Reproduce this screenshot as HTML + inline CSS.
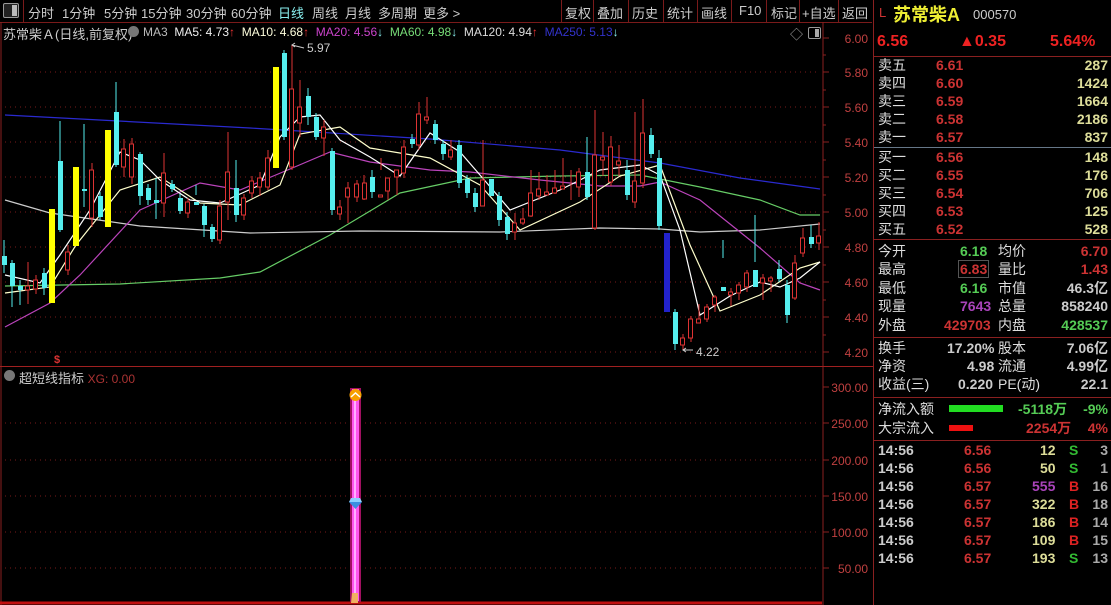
<!DOCTYPE html>
<html><head><meta charset="utf-8"><style>
html,body{margin:0;padding:0;background:#000;width:1111px;height:605px;overflow:hidden;font-family:"Liberation Sans","Noto Sans CJK SC",sans-serif}
.t{position:absolute;white-space:nowrap}
#top{position:absolute;left:0;top:0;width:872px;height:22px;border-bottom:1px solid #7a1a1a;background:#000}
#top span{position:absolute;top:3px;font-size:13px;color:#ccc}
.sep{position:absolute;top:0;width:1px;height:22px;background:#7a1a1a}
#rp{position:absolute;left:873px;top:0;width:238px;height:605px;border-left:1px solid #8a2020}
.row{position:absolute;left:4px;width:230px;height:18px;font-size:14px;line-height:18px;color:#ddd}
.row b{font-weight:bold;position:absolute}
.hl{position:absolute;left:0;width:238px;height:1px;background:#8a2020}
</style></head><body>
<div id="top">
<div style="position:absolute;left:3px;top:3px;width:14px;height:13px;border:1px solid #999;border-radius:2px;background:#222"><div style="position:absolute;right:1px;top:1px;width:5px;height:11px;background:#bbb"></div></div>
<div class="sep" style="left:23px"></div>
<span style="left:28px">分时</span><span style="left:62px">1分钟</span><span style="left:104px">5分钟</span><span style="left:141px">15分钟</span><span style="left:186px">30分钟</span><span style="left:231px">60分钟</span><span style="left:278px;color:#8ee">日线</span><span style="left:312px">周线</span><span style="left:345px">月线</span><span style="left:378px">多周期</span><span style="left:423px">更多 &gt;</span>
<div class="sep" style="left:561px"></div><span style="left:565px">复权</span>
<div class="sep" style="left:593px"></div><span style="left:597px">叠加</span>
<div class="sep" style="left:628px"></div><span style="left:632px">历史</span>
<div class="sep" style="left:663px"></div><span style="left:667px">统计</span>
<div class="sep" style="left:697px"></div><span style="left:701px">画线</span>
<div class="sep" style="left:731px"></div><span style="left:739px">F10</span>
<div class="sep" style="left:766px"></div><span style="left:771px">标记</span>
<div class="sep" style="left:799px"></div><span style="left:802px">+自选</span>
<div class="sep" style="left:838px"></div><span style="left:842px">返回</span>
</div>
<div class="t" style="left:3px;top:24px;font-size:13px;color:#ccc">苏常柴Ａ(日线,前复权)</div>
<div class="t" style="left:128px;top:26px;width:11px;height:11px;border-radius:6px;background:#777"></div>
<div class="t" style="left:143px;top:25px;font-size:12px;color:#bbb">MA3 &nbsp;<span style="color:#eee">MA5: 4.73</span><span style="color:#e33">↑</span> &nbsp;<span style="color:#ffd">MA10: 4.68</span><span style="color:#e33">↑</span> &nbsp;<span style="color:#c4c">MA20: 4.56</span><span style="color:#8ee">↓</span> &nbsp;<span style="color:#7d7">MA60: 4.98</span><span style="color:#8ee">↓</span> &nbsp;<span style="color:#ddd">MA120: 4.94</span><span style="color:#e33">↑</span> &nbsp;<span style="color:#33c">MA250: 5.13</span><span style="color:#8ee">↓</span></div>
<div class="t" style="left:790px;top:24px;font-size:13px;color:#aaa">◇</div>
<div class="t" style="left:808px;top:27px;width:11px;height:10px;border:1px solid #999;border-radius:2px"><div style="position:absolute;right:1px;top:1px;width:4px;height:8px;background:#aaa"></div></div>

<svg style="position:absolute;left:0;top:0" width="873" height="605">
<g stroke="#7a1a1a" stroke-dasharray="1,4" stroke-width="1">
<path d="M5 72H820M5 107H820M5 142H820M5 177H820M5 212H820M5 247H820M5 282H820M5 317H820M5 352H820"/>
<path d="M5 423H820M5 460H820M5 496H820M5 532H820M5 568H820"/>
</g>
<line x1="1" y1="22" x2="1" y2="605" stroke="#8a2020"/>
<line x1="823" y1="22" x2="823" y2="605" stroke="#8a2020"/>
<line x1="0" y1="366.5" x2="873" y2="366.5" stroke="#a02020"/>
<line x1="0" y1="603" x2="822" y2="603" stroke="#c01010" stroke-width="3"/>
<g stroke="#8a2020"><path d="M823 38h6M823 55h3M823 72h6M823 90h3M823 107h6M823 125h3M823 142h6M823 160h3M823 177h6M823 195h3M823 212h6M823 230h3M823 247h6M823 265h3M823 282h6M823 300h3M823 317h6M823 335h3M823 352h6M823 387h6M823 423h6M823 460h6M823 496h6M823 532h6M823 568h6"/></g>
<g font-size="12" fill="#c04040" text-anchor="end" font-family="Liberation Sans">
<text x="868" y="43">6.00</text><text x="868" y="77">5.80</text><text x="868" y="112">5.60</text><text x="868" y="147">5.40</text><text x="868" y="182">5.20</text><text x="868" y="217">5.00</text><text x="868" y="252">4.80</text><text x="868" y="287">4.60</text><text x="868" y="322">4.40</text><text x="868" y="357">4.20</text>
<text x="868" y="392">300.00</text><text x="868" y="428">250.00</text><text x="868" y="465">200.00</text><text x="868" y="501">150.00</text><text x="868" y="537">100.00</text><text x="868" y="573">50.00</text>
</g>
<!-- MAs -->
<g fill="none" stroke-width="1.2">
<polyline stroke="#2a2ad0" points="5,115 250,128 430,139 560,150 660,163 740,178 820,189"/>
<polyline stroke="#6c6" points="5,286 120,284 220,278 260,272 330,235 400,193 470,178 560,176 640,175 700,187 760,200 800,215 820,215"/>
<polyline stroke="#ccc" points="5,200 50,213 140,226 250,233 360,231 500,232 600,228 660,229 700,232 760,230 820,224"/>
<polyline stroke="#b4b" points="5,327 50,303 80,275 140,210 200,183 240,190 290,169 330,152 370,162 430,170 470,172 540,180 600,186 640,186 660,182 700,200 760,248 800,283 820,290"/>
<polyline stroke="#ffc" points="5,293 50,287 76,245 120,190 160,177 200,203 240,205 280,185 300,134 340,127 370,148 430,158 480,185 520,230 580,202 620,176 660,165 690,245 720,311 760,295 800,268 820,262"/>
<polyline stroke="#fff" points="5,275 40,283 60,255 90,210 120,152 140,160 160,180 190,200 220,203 260,185 280,137 300,117 320,115 340,140 370,157 400,176 430,133 460,152 480,175 510,210 560,190 600,170 640,165 660,175 680,230 700,315 730,296 760,282 780,287 800,278 820,262"/>
</g>
<!-- wicks -->
<g stroke="#5ee" stroke-width="1">
<path d="M4 240V273M12 260V307M20 280V305M44 268V295M60 121V232M84 124V207M100 192V220M116 82V167M140 152V205M148 184V205M156 178V219M172 180V192M180 194V214M196 185V195M204 204V237M212 224V242M236 160V222M284 50V140M308 88V125M316 113V140M332 148V215M372 170V198M412 134V148M435 120V144M443 140V160M459 140V188M467 175V198M475 188V212M491 410M499 192V226M507 212V240M587 137V200M627 160V200M651 128V158M659 150V230M675 309V350M723 240V258M755 215V262M779 260V282M787 280V323M811 225V248"/>
</g>
<g stroke="#d33" stroke-width="1">
<path d="M28 262V304M36 275V294M68 245V275M92 163V227M108 258M124 139V177M132 138V184M164 153V217M188 198V218M220 200V244M228 132V220M244 194V220M252 176V198M260 172V196M268 150V190M292 45V170M300 80V137M324 120V156M340 200V220M348 182V223M357 180V202M364 175V200M381 158V170M388 178V200M397 175V195M404 140V178M419 102V150M427 97V124M451 140V160M483 140V202M515 213V240M523 208V225M531 170V217M539 172V200M547 175V195M555 170V194M563 158V185M571 170V200M579 168V197M595 110V230M603 132V176M611 136V186M619 145V176M635 112V208M643 99V188M683 334V350M691 316V342M699 304V322M707 304V322M715 295V312M731 288V306M739 282V300M747 270V292M763 274V300M771 276V292M795 255V300M803 228V257M819 222V250"/>
</g>
<!-- bodies cyan -->
<g fill="#5ee">
<rect x="2" y="256" width="5" height="9"/><rect x="10" y="263" width="5" height="23"/><rect x="18" y="286" width="5" height="4"/><rect x="42" y="273" width="5" height="15"/><rect x="58" y="161" width="5" height="69"/><rect x="82" y="189" width="5" height="2"/><rect x="98" y="196" width="5" height="21"/><rect x="114" y="112" width="5" height="53"/><rect x="138" y="154" width="5" height="42"/><rect x="146" y="188" width="5" height="12"/><rect x="154" y="200" width="5" height="3"/><rect x="170" y="184" width="5" height="5"/><rect x="178" y="198" width="5" height="13"/><rect x="194" y="202" width="5" height="3"/><rect x="202" y="206" width="5" height="19"/><rect x="210" y="227" width="5" height="12"/><rect x="234" y="188" width="5" height="27"/><rect x="282" y="53" width="5" height="84"/><rect x="306" y="96" width="5" height="21"/><rect x="314" y="117" width="5" height="20"/><rect x="330" y="151" width="5" height="59"/><rect x="370" y="177" width="5" height="15"/><rect x="410" y="139" width="5" height="5"/><rect x="433" y="124" width="5" height="16"/><rect x="441" y="144" width="5" height="10"/><rect x="457" y="145" width="5" height="38"/><rect x="465" y="179" width="5" height="14"/><rect x="473" y="193" width="5" height="14"/><rect x="489" y="179" width="5" height="17"/><rect x="497" y="196" width="5" height="24"/><rect x="505" y="217" width="5" height="17"/><rect x="585" y="172" width="5" height="25"/><rect x="625" y="170" width="5" height="25"/><rect x="649" y="135" width="5" height="19"/><rect x="657" y="158" width="5" height="68"/><rect x="673" y="312" width="5" height="32"/><rect x="721" y="287" width="5" height="4"/><rect x="753" y="270" width="5" height="17"/><rect x="777" y="269" width="5" height="10"/><rect x="785" y="285" width="5" height="30"/><rect x="809" y="237" width="5" height="7"/>
</g>
<g fill="#ff0"><rect x="49" y="209" width="6" height="94"/><rect x="73" y="167" width="6" height="79"/><rect x="105" y="130" width="6" height="97"/><rect x="273" y="67" width="6" height="101"/></g>
<rect x="664" y="233" width="6" height="79" fill="#22c"/>
<!-- red hollow bodies -->
<g fill="#000" stroke="#d33" stroke-width="1">
<rect x="25.5" y="286" width="4" height="4"/><rect x="33.5" y="280" width="4" height="9"/><rect x="65.5" y="252" width="4" height="18"/><rect x="89.5" y="170" width="4" height="48"/><rect x="121.5" y="149" width="4" height="18"/><rect x="129.5" y="144" width="4" height="33"/><rect x="161.5" y="173" width="4" height="30"/><rect x="185.5" y="202" width="4" height="11"/><rect x="217.5" y="206" width="4" height="34"/><rect x="225.5" y="172" width="4" height="30"/><rect x="241.5" y="198" width="4" height="17"/><rect x="249.5" y="181" width="4" height="12"/><rect x="257.5" y="178" width="4" height="9"/><rect x="265.5" y="158" width="4" height="29"/><rect x="289.5" y="89" width="4" height="78"/><rect x="297.5" y="107" width="4" height="16"/><rect x="321.5" y="127" width="4" height="11"/><rect x="337.5" y="207" width="4" height="7"/><rect x="345.5" y="188" width="4" height="9"/><rect x="354.5" y="184" width="4" height="13"/><rect x="362.5" y="183" width="4" height="16"/><rect x="378.5" y="195" width="4" height="2"/><rect x="385.5" y="178" width="4" height="13"/><rect x="394.5" y="170" width="4" height="7"/><rect x="401.5" y="147" width="4" height="26"/><rect x="416.5" y="114" width="4" height="31"/><rect x="424.5" y="117" width="4" height="3"/><rect x="448.5" y="150" width="4" height="7"/><rect x="480.5" y="180" width="4" height="26"/><rect x="512.5" y="223" width="4" height="9"/><rect x="520.5" y="219" width="4" height="4"/><rect x="528.5" y="193" width="4" height="23"/><rect x="536.5" y="189" width="4" height="7"/><rect x="544.5" y="192" width="4" height="3"/><rect x="552.5" y="188" width="4" height="5"/><rect x="560.5" y="186" width="4" height="3"/><rect x="576.5" y="172" width="4" height="15"/><rect x="592.5" y="155" width="4" height="73"/><rect x="600.5" y="157" width="4" height="3"/><rect x="608.5" y="147" width="4" height="35"/><rect x="616.5" y="161" width="4" height="4"/><rect x="632.5" y="181" width="4" height="21"/><rect x="640.5" y="133" width="4" height="50"/><rect x="680.5" y="338" width="4" height="7"/><rect x="688.5" y="319" width="4" height="19"/><rect x="696.5" y="319" width="4" height="4"/><rect x="704.5" y="307" width="4" height="12"/><rect x="712.5" y="297" width="4" height="8"/><rect x="728.5" y="292" width="4" height="3"/><rect x="736.5" y="285" width="4" height="8"/><rect x="744.5" y="273" width="4" height="14"/><rect x="760.5" y="278" width="4" height="5"/><rect x="768.5" y="278" width="4" height="3"/><rect x="792.5" y="263" width="4" height="35"/><rect x="800.5" y="238" width="4" height="15"/><rect x="816.5" y="236" width="4" height="7"/>
</g>
<g fill="#ccc" font-size="12" font-family="Liberation Sans"><text x="307" y="52">5.97</text><text x="696" y="356">4.22</text></g>
<path d="M292 45l12 3M295 43l-3 2 3 2M683 350h10M686 348l-3 2 3 2" stroke="#ccc" fill="none"/>
<text x="54" y="363" fill="#d33" font-size="11" font-weight="bold">$</text>
<!-- indicator -->
<rect x="350" y="388" width="11" height="214" fill="#a01060"/>
<rect x="352" y="389" width="7" height="212" fill="#ff55ee"/>
<rect x="354" y="389" width="2" height="212" fill="#ffb0ff"/>
<circle cx="355.5" cy="395" r="6" fill="#f7a000"/><path d="M351 397l4.5-4 4.5 4" stroke="#fff" stroke-width="1.5" fill="none"/>
<path d="M349 502h13l-6.5 7z" fill="#3a8fe0"/><path d="M351 498h9l2 4h-13z" fill="#8cd0ff"/>
<path d="M352 593h6v10h-7z" fill="#f0b060"/>
</svg>
<div class="t" style="left:4px;top:370px;width:11px;height:11px;border-radius:6px;background:#777"></div>
<div class="t" style="left:19px;top:368px;font-size:13px;color:#ccc">超短线指标 <span style="color:#a33;font-size:12px">XG: 0.00</span></div>

<div id="rp">
<div class="t" style="left:5px;top:5px;font-size:13px;color:#c33">L</div>
<div class="t" style="left:19px;top:1px;font-size:18px;color:#ee3;font-weight:bold">苏常柴A</div>
<div class="t" style="left:99px;top:7px;font-size:13px;color:#ccc">000570</div>
<div class="t" style="left:3px;top:33px;font-size:16px;color:#e22;font-weight:bold">6.56</div>
<div class="t" style="left:85px;top:33px;font-size:16px;color:#e22;font-weight:bold">▲0.35</div>
<div class="t" style="left:176px;top:33px;font-size:16px;color:#e22;font-weight:bold">5.64%</div>
<div class="hl" style="top:56px"></div>
<div class="row" style="top:56px">卖五<b style="left:58px;color:#c33">6.61</b><b style="right:0;color:#dd9">287</b></div>
<div class="row" style="top:74px">卖四<b style="left:58px;color:#c33">6.60</b><b style="right:0;color:#dd9">1424</b></div>
<div class="row" style="top:92px">卖三<b style="left:58px;color:#c33">6.59</b><b style="right:0;color:#dd9">1664</b></div>
<div class="row" style="top:110px">卖二<b style="left:58px;color:#c33">6.58</b><b style="right:0;color:#dd9">2186</b></div>
<div class="row" style="top:128px">卖一<b style="left:58px;color:#c33">6.57</b><b style="right:0;color:#dd9">837</b></div>
<div class="hl" style="top:147px;background:#678"></div>
<div class="row" style="top:148px">买一<b style="left:58px;color:#c33">6.56</b><b style="right:0;color:#dd9">148</b></div>
<div class="row" style="top:166px">买二<b style="left:58px;color:#c33">6.55</b><b style="right:0;color:#dd9">176</b></div>
<div class="row" style="top:184px">买三<b style="left:58px;color:#c33">6.54</b><b style="right:0;color:#dd9">706</b></div>
<div class="row" style="top:202px">买四<b style="left:58px;color:#c33">6.53</b><b style="right:0;color:#dd9">125</b></div>
<div class="row" style="top:220px">买五<b style="left:58px;color:#c33">6.52</b><b style="right:0;color:#dd9">528</b></div>
<div class="hl" style="top:239px"></div>
<div class="row" style="top:242px">今开<b style="left:82px;color:#5c5">6.18</b><span style="position:absolute;left:120px">均价</span><b style="right:0;color:#c33">6.70</b></div>
<div class="row" style="top:260px">最高<b style="left:80px;color:#c33;border:1px solid #555;padding:0 1px;line-height:16px">6.83</b><span style="position:absolute;left:120px">量比</span><b style="right:0;color:#c33">1.43</b></div>
<div class="row" style="top:279px">最低<b style="left:82px;color:#5c5">6.16</b><span style="position:absolute;left:120px">市值</span><b style="right:0;color:#ccc">46.3亿</b></div>
<div class="row" style="top:297px">现量<b style="left:82px;color:#a4b">7643</b><span style="position:absolute;left:120px">总量</span><b style="right:0;color:#ccc">858240</b></div>
<div class="row" style="top:316px">外盘<b style="left:66px;color:#c33">429703</b><span style="position:absolute;left:120px">内盘</span><b style="right:0;color:#5c5">428537</b></div>
<div class="hl" style="top:337px"></div>
<div class="row" style="top:339px">换手<b style="left:69px;color:#ccc">17.20%</b><span style="position:absolute;left:120px">股本</span><b style="right:0;color:#ccc">7.06亿</b></div>
<div class="row" style="top:357px">净资<b style="left:89px;color:#ccc">4.98</b><span style="position:absolute;left:120px">流通</span><b style="right:0;color:#ccc">4.99亿</b></div>
<div class="row" style="top:375px">收益(三)<b style="left:80px;color:#ccc">0.220</b><span style="position:absolute;left:120px">PE(动)</span><b style="right:0;color:#ccc">22.1</b></div>
<div class="hl" style="top:397px"></div>
<div class="row" style="top:400px">净流入额<div style="position:absolute;left:71px;top:5px;width:54px;height:7px;background:#2d2"></div><b style="left:140px;color:#5c5">-5118万</b><b style="right:0;color:#5c5">-9%</b></div>
<div class="row" style="top:419px">大宗流入<div style="position:absolute;left:71px;top:6px;width:24px;height:6px;background:#e11"></div><b style="left:148px;color:#c33">2254万</b><b style="right:0;color:#c33">4%</b></div>
<div class="hl" style="top:440px"></div>
<div class="row" style="top:441px"><b style="left:0;color:#ccc">14:56</b><b style="left:86px;color:#c33">6.56</b><b style="left:162px;color:#dd9">12</b><b style="left:191px;color:#3b3">S</b><b style="right:0;color:#aaa">3</b></div>
<div class="row" style="top:459px"><b style="left:0;color:#ccc">14:56</b><b style="left:86px;color:#c33">6.56</b><b style="left:162px;color:#dd9">50</b><b style="left:191px;color:#3b3">S</b><b style="right:0;color:#aaa">1</b></div>
<div class="row" style="top:477px"><b style="left:0;color:#ccc">14:56</b><b style="left:86px;color:#c33">6.57</b><b style="left:154px;color:#a4b">555</b><b style="left:191px;color:#d22">B</b><b style="right:0;color:#aaa">16</b></div>
<div class="row" style="top:495px"><b style="left:0;color:#ccc">14:56</b><b style="left:86px;color:#c33">6.57</b><b style="left:154px;color:#dd9">322</b><b style="left:191px;color:#d22">B</b><b style="right:0;color:#aaa">18</b></div>
<div class="row" style="top:513px"><b style="left:0;color:#ccc">14:56</b><b style="left:86px;color:#c33">6.57</b><b style="left:154px;color:#dd9">186</b><b style="left:191px;color:#d22">B</b><b style="right:0;color:#aaa">14</b></div>
<div class="row" style="top:531px"><b style="left:0;color:#ccc">14:56</b><b style="left:86px;color:#c33">6.57</b><b style="left:154px;color:#dd9">109</b><b style="left:191px;color:#d22">B</b><b style="right:0;color:#aaa">15</b></div>
<div class="row" style="top:549px"><b style="left:0;color:#ccc">14:56</b><b style="left:86px;color:#c33">6.57</b><b style="left:154px;color:#dd9">193</b><b style="left:191px;color:#3b3">S</b><b style="right:0;color:#aaa">13</b></div>
</div>
</body></html>
